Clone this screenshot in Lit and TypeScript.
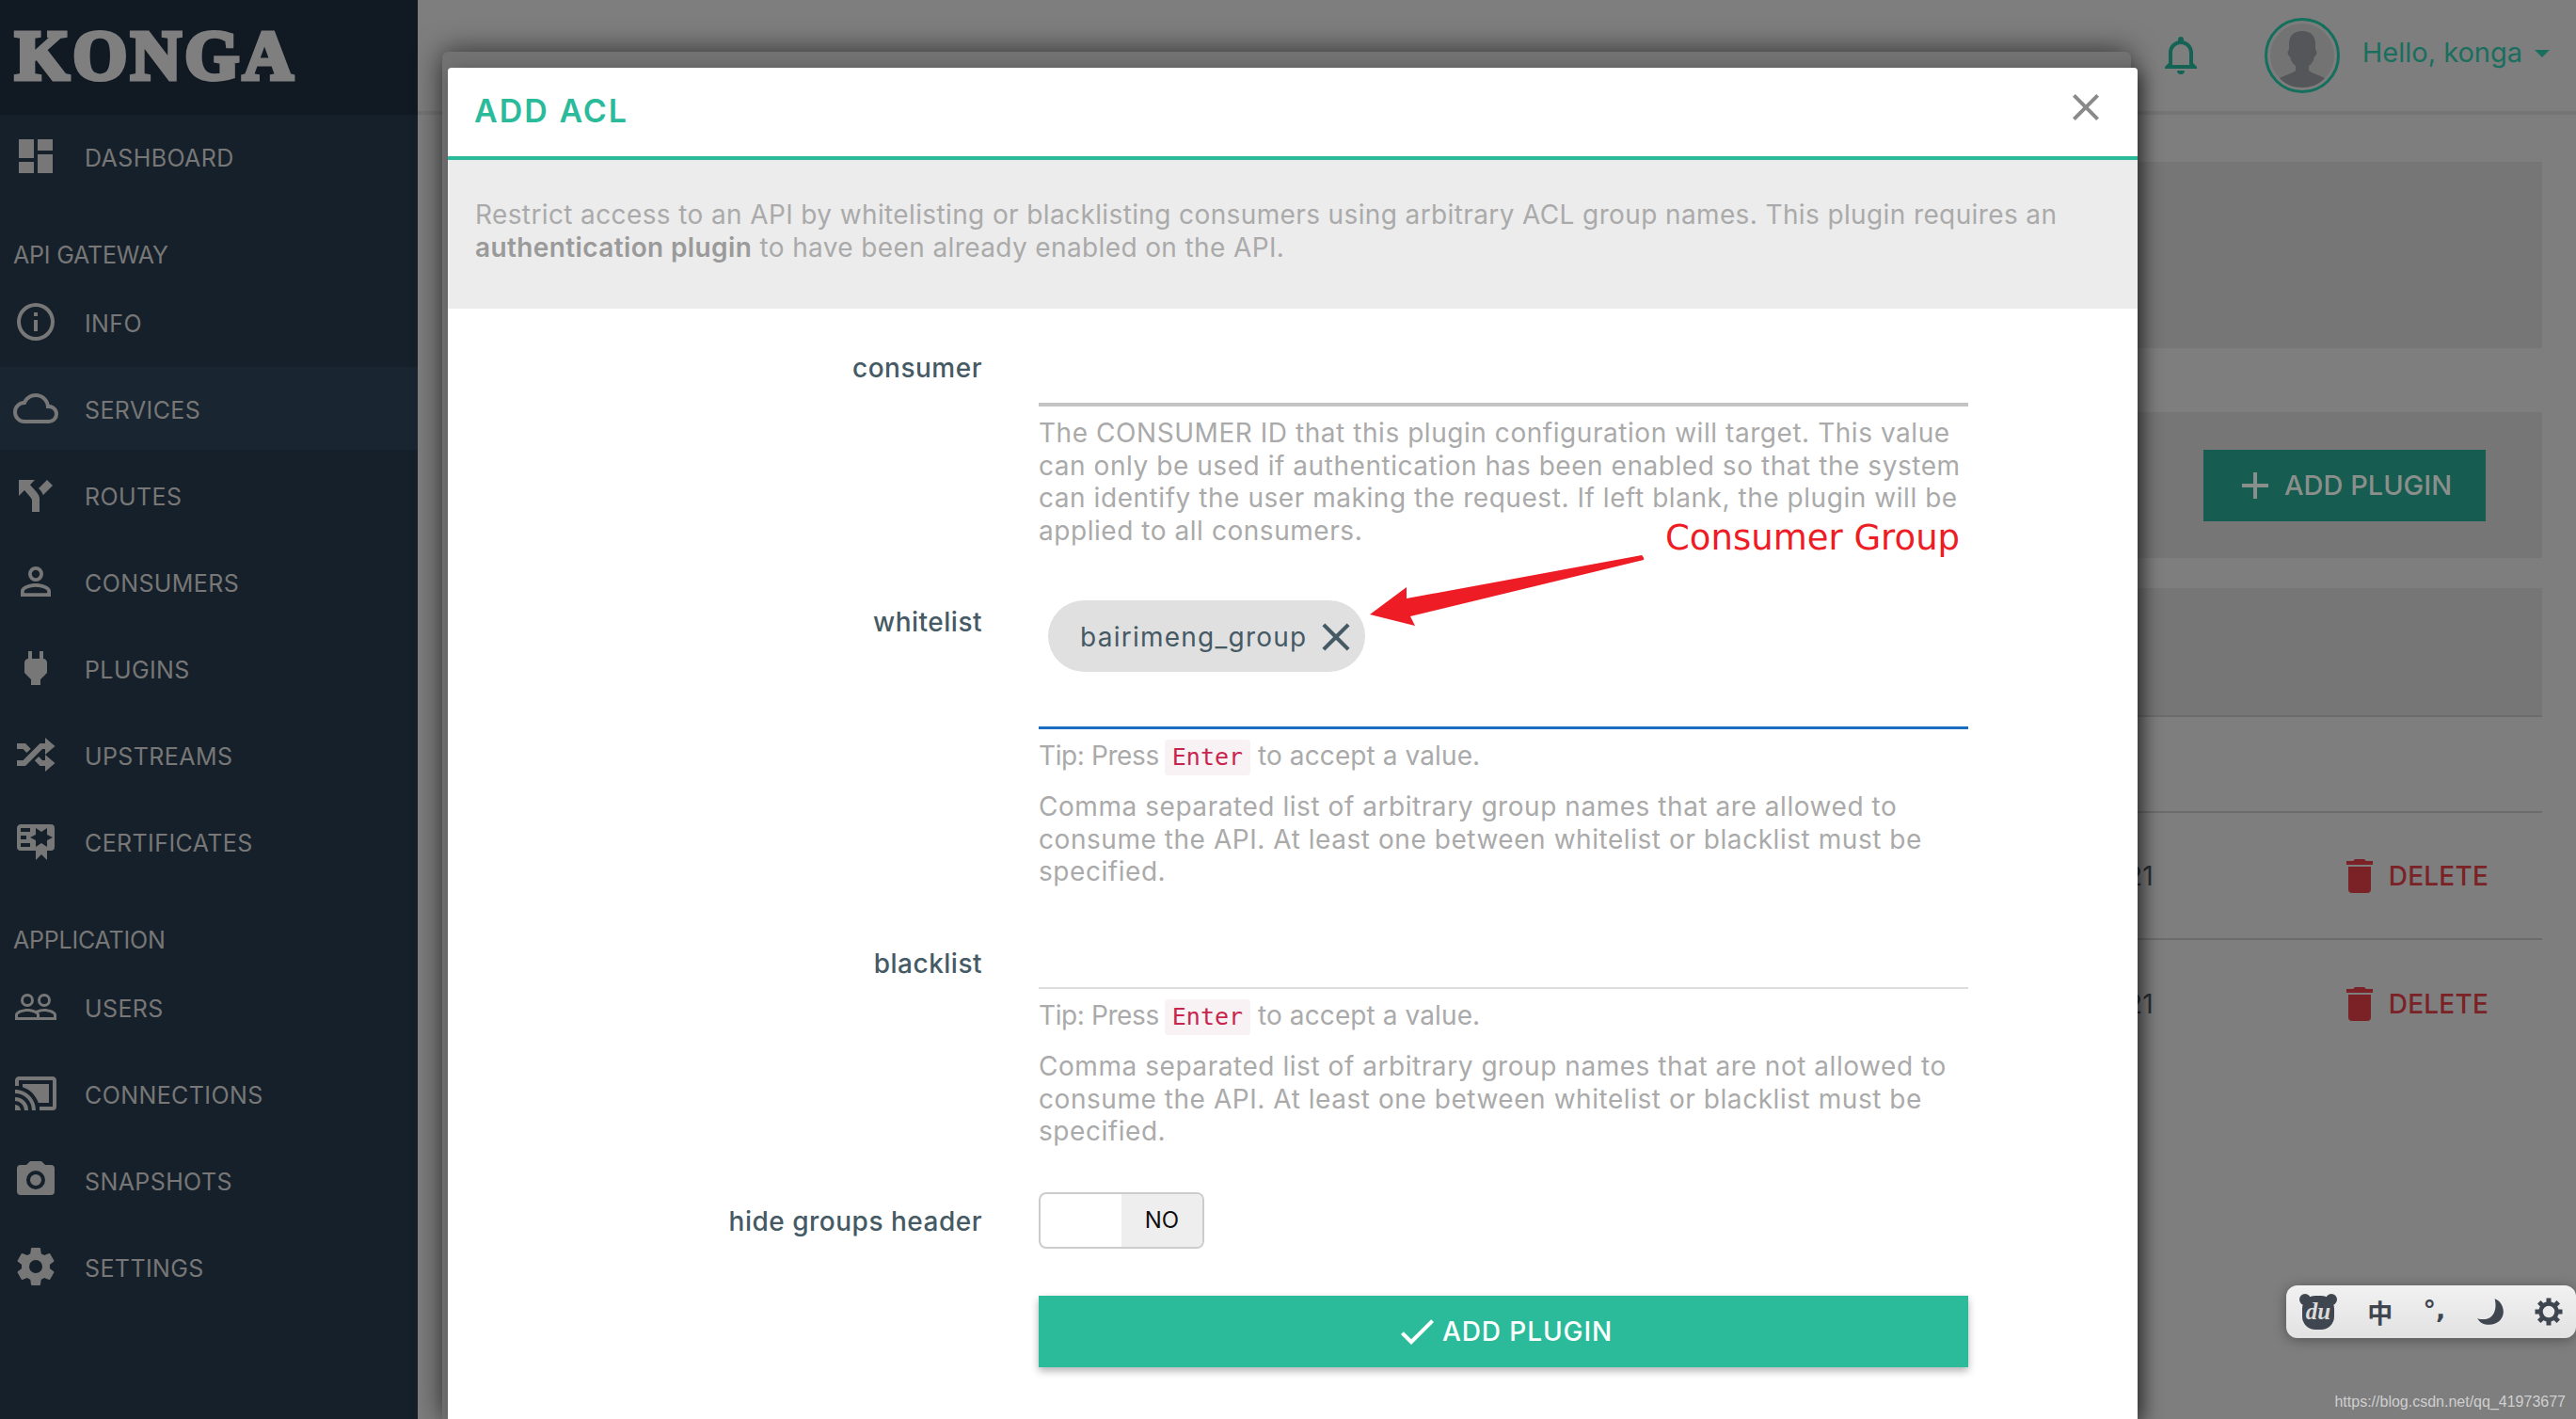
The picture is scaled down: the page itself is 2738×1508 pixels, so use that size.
import { LitElement, html, svg, css } from 'lit';
import { customElement } from 'lit/decorators.js';

// Material design icon paths
const ICONS: Record<string, string> = {
	dashboard: 'M13,3V9H21V3M13,21H21V11H13M3,21H11V15H3M3,13H11V3H3V13Z',
	info: 'M11,9H13V7H11M12,20C7.59,20 4,16.41 4,12C4,7.59 7.59,4 12,4C16.41,4 20,7.59 20,12C20,16.41 16.41,20 12,20M12,2A10,10 0 0,0 2,12A10,10 0 0,0 12,22A10,10 0 0,0 22,12A10,10 0 0,0 12,2M11,17H13V11H11V17Z',
	cloud: 'M19,18H6A4,4 0 0,1 2,14A4,4 0 0,1 6,10H6.71C7.37,7.69 9.5,6 12,6A5.5,5.5 0 0,1 17.5,11.5V12H19A3,3 0 0,1 22,15A3,3 0 0,1 19,18M19.35,10.03C18.67,6.59 15.64,4 12,4C9.11,4 6.6,5.64 5.35,8.03C2.34,8.36 0,10.9 0,14A6,6 0 0,0 6,20H19A5,5 0 0,0 24,15C24,12.36 21.95,10.22 19.35,10.03Z',
	fork: 'M3,4V12.5L6,9.5L9,13C10,14 10,15 10,15V21H14V14C14,14 14,13 13.47,12C12.94,11 12,10 12,10L9,6.58L11.5,4M18,4L13.54,8.47L14,9C14,9 14.93,10 15.47,11C15.68,11.4 15.8,11.79 15.87,12.13L21,7',
	account: 'M12,13C9.33,13 4,14.33 4,17V20H20V17C20,14.33 14.67,13 12,13M12,4A4,4 0 0,0 8,8A4,4 0 0,0 12,12A4,4 0 0,0 16,8A4,4 0 0,0 12,4M12,14.9C14.97,14.9 18.1,16.36 18.1,17V18.1H5.9V17C5.9,16.36 9,14.9 12,14.9M12,5.9A2.1,2.1 0 0,1 14.1,8A2.1,2.1 0 0,1 12,10.1A2.1,2.1 0 0,1 9.9,8A2.1,2.1 0 0,1 12,5.9Z',
	plug: 'M16,7V3H14V7H10V3H8V7H8C7,7 6,8 6,9V14.5L9.5,18V21H14.5V18L18,14.5V9C18,8 17,7 16,7Z',
	shuffle: 'M17,3L22.25,7.5L17,12L22.25,16.5L17,21V18H14.26L11.44,15.18L13.56,13.06L15.5,15H17V12L17,9H15.5L6.5,18H2V15H5.26L14.26,6H17V3M2,6H6.5L9.32,8.82L7.2,10.94L5.26,9H2V6Z',
	certificate: 'M4,3C2.89,3 2,3.89 2,5V15A2,2 0 0,0 4,17H12V22L15,19L18,22V17H20A2,2 0 0,0 22,15V8L22,6V5A2,2 0 0,0 20,3H16V3H4M12,5L15,7L18,5V8.5L21,10L18,11.5V15L15,13L12,15V11.5L9,10L12,8.5V5M4,5H9V7H4V5M4,9H7V11H4V9M4,13H9V15H4V13Z',
	users: 'M16.5,6.5A2,2 0 0,1 18.5,8.5A2,2 0 0,1 16.5,10.5A2,2 0 0,1 14.5,8.5A2,2 0 0,1 16.5,6.5M16.5,12A3.5,3.5 0 0,0 20,8.5A3.5,3.5 0 0,0 16.5,5A3.5,3.5 0 0,0 13,8.5A3.5,3.5 0 0,0 16.5,12M7.5,6.5A2,2 0 0,1 9.5,8.5A2,2 0 0,1 7.5,10.5A2,2 0 0,1 5.5,8.5A2,2 0 0,1 7.5,6.5M7.5,12A3.5,3.5 0 0,0 11,8.5A3.5,3.5 0 0,0 7.5,5A3.5,3.5 0 0,0 4,8.5A3.5,3.5 0 0,0 7.5,12M21.5,17.5H14V16.25C14,15.79 13.8,15.39 13.5,15.03C14.36,14.73 15.44,14.5 16.5,14.5C18.94,14.5 21.5,15.71 21.5,16.25M12.5,17.5H2.5V16.25C2.5,15.71 5.06,14.5 7.5,14.5C9.94,14.5 12.5,15.71 12.5,16.25M16.5,13C15.3,13 13.43,13.34 12,14C10.57,13.33 8.7,13 7.5,13C5.33,13 1,14.08 1,16.25V19H23V16.25C23,14.08 18.67,13 16.5,13Z',
	cast: 'M21,3H3C1.89,3 1,3.89 1,5V8H3V5H21V19H14V21H21A2,2 0 0,0 23,19V5C23,3.89 22.1,3 21,3M1,10V12A9,9 0 0,1 10,21H12C12,14.92 7.07,10 1,10M19,7H5V8.63C8.96,9.91 12.09,13.04 13.37,17H19M1,14V16A5,5 0 0,1 6,21H8A7,7 0 0,0 1,14M1,18V21H4A3,3 0 0,0 1,18Z',
	camera: 'M4,4H7L9,2H15L17,4H20A2,2 0 0,1 22,6V18A2,2 0 0,1 20,20H4A2,2 0 0,1 2,18V6A2,2 0 0,1 4,4M12,7A5,5 0 0,0 7,12A5,5 0 0,0 12,17A5,5 0 0,0 17,12A5,5 0 0,0 12,7M12,9A3,3 0 0,1 15,12A3,3 0 0,1 12,15A3,3 0 0,1 9,12A3,3 0 0,1 12,9Z',
	settings: 'M12,15.5A3.5,3.5 0 0,1 8.5,12A3.5,3.5 0 0,1 12,8.5A3.5,3.5 0 0,1 15.5,12A3.5,3.5 0 0,1 12,15.5M19.43,12.97C19.47,12.65 19.5,12.33 19.5,12C19.5,11.67 19.47,11.34 19.43,11L21.54,9.37C21.73,9.22 21.78,8.95 21.66,8.73L19.66,5.27C19.54,5.05 19.27,4.96 19.05,5.05L16.56,6.05C16.04,5.66 15.5,5.32 14.87,5.07L14.5,2.42C14.46,2.18 14.25,2 14,2H10C9.75,2 9.54,2.18 9.5,2.42L9.13,5.07C8.5,5.32 7.96,5.66 7.44,6.05L4.95,5.05C4.73,4.96 4.46,5.05 4.34,5.27L2.34,8.73C2.21,8.95 2.27,9.22 2.46,9.37L4.57,11C4.53,11.34 4.5,11.67 4.5,12C4.5,12.33 4.53,12.65 4.57,12.97L2.46,14.63C2.27,14.78 2.21,15.05 2.34,15.27L4.34,18.73C4.46,18.95 4.73,19.03 4.95,18.95L7.44,17.94C7.96,18.34 8.5,18.68 9.13,18.93L9.5,21.58C9.54,21.82 9.75,22 10,22H14C14.25,22 14.46,21.82 14.5,21.58L14.87,18.93C15.5,18.67 16.04,18.34 16.56,17.94L19.05,18.95C19.27,19.03 19.54,18.95 19.66,18.73L21.66,15.27C21.78,15.05 21.73,14.78 21.54,14.63L19.43,12.97Z',
	bell: 'M16,17H7V10.5C7,8 9,6 11.5,6C14,6 16,8 16,10.5M18,16V10.5C18,7.43 15.86,4.86 13,4.18V3.5A1.5,1.5 0 0,0 11.5,2A1.5,1.5 0 0,0 10,3.5V4.18C7.13,4.86 5,7.43 5,10.5V16L3,18V19H20V18M11.5,22A2,2 0 0,0 13.5,20H9.5A2,2 0 0,0 11.5,22Z',
	trash: 'M19,4H15.5L14.5,3H9.5L8.5,4H5V6H19M6,19A2,2 0 0,0 8,21H16A2,2 0 0,0 18,19V7H6V19Z',
	close: 'M19,6.41L17.59,5L12,10.59L6.41,5L5,6.41L10.59,12L5,17.59L6.41,19L12,13.41L17.59,19L19,17.59L13.41,12L19,6.41Z',
	check: 'M21,7L9,19L3.5,13.5L4.91,12.09L9,16.17L19.59,5.59L21,7Z',
	plus: 'M19,13H13V19H11V13H5V11H11V5H13V11H19V13Z',
};

const icon = (name: string, cls = '') =>
	html`<svg class="icon ${cls}" viewBox="0 0 24 24"><path d=${ICONS[name]}></path></svg>`;

type NavEntry = { label: string; icon?: string; active?: boolean };

const NAV: NavEntry[] = [
	{ label: 'DASHBOARD', icon: 'dashboard' },
	{ label: 'API GATEWAY' },
	{ label: 'INFO', icon: 'info' },
	{ label: 'SERVICES', icon: 'cloud', active: true },
	{ label: 'ROUTES', icon: 'fork' },
	{ label: 'CONSUMERS', icon: 'account' },
	{ label: 'PLUGINS', icon: 'plug' },
	{ label: 'UPSTREAMS', icon: 'shuffle' },
	{ label: 'CERTIFICATES', icon: 'certificate' },
	{ label: 'APPLICATION' },
	{ label: 'USERS', icon: 'users' },
	{ label: 'CONNECTIONS', icon: 'cast' },
	{ label: 'SNAPSHOTS', icon: 'camera' },
	{ label: 'SETTINGS', icon: 'settings' },
];

// Teeth of the input-method widget's gear
const GEAR_TEETH = [0, 45, 90, 135, 180, 225, 270, 315];

@customElement('app-root')
export class AppRoot extends LitElement {
	static styles = css`
		:host {
			display: block;
			position: relative;
			width: 2738px;
			height: 1508px;
			overflow: hidden;
			background: #7e7e7e;
			font-family: Inter, 'Liberation Sans', sans-serif;
		}
		* {
			box-sizing: border-box;
		}
		.icon {
			display: block;
			width: 48px;
			height: 48px;
			fill: currentColor;
			flex: none;
		}
		.page {
			display: flex;
			height: 100%;
		}

		/* Sidebar */
		.sidebar {
			width: 444px;
			flex: none;
			background: #16202a;
			color: #777;
			font-size: 25px;
		}
		.logo {
			height: 122px;
			background: #111923;
			padding: 14px 0 0 16px;
			font: bold 74px/90px 'Liberation Serif', serif;
			letter-spacing: 4px;
			color: #7f7f7f;
			-webkit-text-stroke: 5px #7f7f7f;
		}
		.item {
			display: flex;
			align-items: center;
			height: 88px;
			margin-bottom: 4px;
			padding-left: 14px;
			letter-spacing: 0.4px;
		}
		.item span {
			margin-top: 3px;
		}
		.item.active {
			background: #192530;
		}
		.item .icon {
			margin-right: 28px;
		}
		.section {
			height: 84px;
			padding: 32px 0 0 14px;
			line-height: 50px;
			letter-spacing: -0.2px;
		}

		/* Page behind the dialog */
		.main {
			flex: 1;
			min-width: 0;
			position: relative;
		}
		.topbar {
			display: flex;
			align-items: center;
			justify-content: flex-end;
			height: 122px;
			border-bottom: 4px solid #757575;
			padding-right: 28px;
			color: #1a6e5e;
			font-size: 29px;
		}
		.bell {
			color: #146355;
			margin-right: 64px;
		}
		.avatar {
			width: 80px;
			height: 80px;
			margin-right: 24px;
		}
		.hello {
			margin-top: -8px;
		}
		.caret {
			width: 0;
			height: 0;
			margin: -4px 0 0 13px;
			border: 8px solid transparent;
			border-top-color: #1a6e5e;
			border-bottom: 0;
		}
		.content {
			padding: 50px 36px 0 40px;
		}
		.tab-mark {
			position: absolute;
			left: 26px;
			top: 150px;
			width: 60px;
			height: 4px;
			background: #15564a;
		}
		.panel {
			background: #767676;
		}
		.panel.one {
			height: 198px;
			margin-bottom: 68px;
		}
		.panel.two {
			display: flex;
			align-items: center;
			justify-content: flex-end;
			height: 155px;
			margin-bottom: 32px;
			padding-right: 60px;
		}
		.panel.three {
			height: 137px;
			border-bottom: 2px solid #6c6c6c;
		}
		.add-btn {
			display: flex;
			align-items: center;
			width: 300px;
			height: 76px;
			padding-left: 31px;
			background: #165c50;
			color: #8a8f8c;
			font-size: 29px;
			font-weight: 500;
		}
		.add-btn .icon {
			margin-right: 7px;
		}
		.row {
			display: flex;
			align-items: center;
			justify-content: flex-end;
			height: 135px;
			border-bottom: 2px solid #6c6c6c;
			padding-right: 57px;
			color: #7a2226;
			font-size: 28px;
			font-weight: 500;
			letter-spacing: 0.2px;
		}
		.row.first {
			height: 102px;
		}
		.row.plain {
			border-bottom: 0;
		}
		.row .when {
			margin-right: 195px;
			color: #2a3035;
			font-weight: 400;
			font-size: 28px;
		}
		.row .icon {
			margin-right: 7px;
		}

		/* Dialog */
		.dialog-back {
			position: absolute;
			left: 470px;
			top: 55px;
			width: 1795px;
			height: 1453px;
			background: #727272;
			border-radius: 6px 6px 0 0;
			box-shadow: 0 0 30px rgba(0, 0, 0, 0.65);
		}
		.dialog {
			position: absolute;
			left: 476px;
			top: 72px;
			width: 1796px;
			height: 1436px;
			background: #fff;
			border-radius: 4px 4px 0 0;
			box-shadow: 6px 6px 18px rgba(0, 0, 0, 0.45);
		}
		.dialog-head {
			display: flex;
			align-items: center;
			justify-content: space-between;
			height: 98px;
			padding: 0 31px 4px 28px;
			border-bottom: 4px solid #2bbb9b;
			color: #2bbb9b;
			font-size: 34px;
			font-weight: 600;
			letter-spacing: 2px;
		}
		.dialog-head .icon {
			color: #8a8a8a;
			margin-top: -6px;
		}
		.intro {
			height: 158px;
			padding: 41px 30px 0 29px;
			background: #ececec;
			color: #aaa;
			font-size: 28px;
			line-height: 34.5px;
			letter-spacing: 0.38px;
		}
		.intro strong {
			font-weight: 600;
			color: #9a9a9a;
		}
		.form {
			padding-top: 40px;
		}
		.field {
			display: grid;
			grid-template-columns: 568px 988px;
			column-gap: 60px;
			margin-bottom: 39px;
		}
		.field > label {
			text-align: right;
			padding-top: 24px;
			color: #455a64;
			font-size: 28px;
			font-weight: 500;
			line-height: 34px;
			letter-spacing: 0.5px;
		}
		.field.consumer > label {
			padding-top: 6px;
		}
		.line {
			height: 68px;
			border-bottom: 2px solid #ddd;
		}
		.field.consumer .line {
			height: 64px;
			border-bottom: 4px solid #c4c4c4;
		}
		.line.focus {
			height: 155px;
			padding: 18px 0 0 10px;
			border-bottom: 3px solid #1c6cc0;
		}
		.chip {
			display: inline-flex;
			align-items: center;
			width: 337px;
			height: 76px;
			padding: 2px 0 0 34px;
			border-radius: 38px;
			background: #e0e0e0;
			color: #455a64;
			font-size: 28px;
			letter-spacing: 1.25px;
		}
		.chip .icon {
			width: 50px;
			height: 50px;
			margin-left: 5px;
		}
		.help {
			color: #aaa;
			font-size: 28px;
			line-height: 34.5px;
			letter-spacing: 0.55px;
		}
		.help.top {
			margin-top: 11px;
		}
		.help.tip {
			margin: 11px 0 16px;
			letter-spacing: 0.1px;
		}
		.press {
			letter-spacing: -0.4px;
		}
		code {
			display: inline-block;
			padding: 0 8px;
			height: 38px;
			margin-left: -2px;
			border-radius: 4px;
			background: #f9f2f4;
			color: #c7254e;
			font: 25px/38px 'DejaVu Sans Mono', monospace;
			letter-spacing: 0;
			vertical-align: middle;
		}
		.field.toggle {
			margin: 47px 0 50px;
			align-items: center;
		}
		.field.toggle > label {
			padding-top: 0;
			margin-top: 3px;
		}
		.switch {
			display: flex;
			width: 176px;
			height: 60px;
			border: 2px solid #ccc;
			border-radius: 8px;
			overflow: hidden;
		}
		.switch span {
			flex: 1;
			display: flex;
			align-items: center;
			justify-content: center;
			font-size: 24px;
			color: #111;
		}
		.switch span.off {
			background: #eee;
		}
		.submit {
			display: flex;
			align-items: center;
			justify-content: center;
			width: 988px;
			height: 76px;
			margin-left: 628px;
			background: #2bbb9b;
			color: #fff;
			font-size: 28px;
			font-weight: 500;
			letter-spacing: 0.9px;
			box-shadow: 0 4px 8px rgba(0, 0, 0, 0.3);
		}
		.submit .icon {
			margin-right: 3px;
		}

		/* Red annotation pasted on the screenshot */
		.note {
			position: absolute;
			left: 1770px;
			top: 550px;
			color: #ee1c25;
			font: 37px/44px 'DejaVu Sans', sans-serif;
			white-space: nowrap;
		}
		.arrow {
			position: absolute;
			left: 1440px;
			top: 580px;
			width: 320px;
			height: 100px;
			fill: #ee1c25;
		}

		/* Browser input-method widget */
		.ime {
			position: absolute;
			left: 2430px;
			top: 1366px;
			display: flex;
			align-items: center;
			justify-content: space-between;
			width: 308px;
			height: 56px;
			padding: 0 14px 0 14px;
			border-radius: 12px;
			background: linear-gradient(#f1f1f1, #e2e2e2);
			box-shadow: 0 2px 14px rgba(0, 0, 0, 0.35);
			color: #3f4650;
		}
		.ime svg {
			display: block;
			flex: none;
		}
		.ime .zh {
			font: bold 27px/1 'Noto Sans CJK SC', sans-serif;
		}
		.ime .punct {
			font: bold 27px/1 'DejaVu Sans', sans-serif;
			margin-top: -6px;
		}
		.ime .gear {
			width: 30px;
			height: 30px;
			color: #3f4650;
		}
		.watermark {
			position: absolute;
			right: 11px;
			top: 1480px;
			color: #cfcfcf;
			font: 16px/20px 'Liberation Sans', sans-serif;
		}
	`;

	private _renderNav(entry: NavEntry) {
		if (!entry.icon) return html`<div class="section">${entry.label}</div>`;
		return html`
			<div class="item ${entry.active ? 'active' : ''}">
				${icon(entry.icon)}<span>${entry.label}</span>
			</div>
		`;
	}

	private _renderTip() {
		return html`
			<div class="help tip"><span class="press">Tip: Press</span> <code>Enter</code> to accept a value.</div>
		`;
	}

	render() {
		return html`
			<div class="page">
				<aside class="sidebar">
					<div class="logo">KONGA</div>
					${NAV.map((entry) => this._renderNav(entry))}
				</aside>
				<div class="main">
					<div class="topbar">
						${icon('bell', 'bell')}
						<svg class="avatar" viewBox="0 0 80 80">
							<circle cx="40" cy="40" r="38.5" fill="#7d7d7d" stroke="#146f5d" stroke-width="3"></circle>
							<circle cx="40" cy="40" r="34" fill="#737373"></circle>
							<path fill="#55565a" d="M40 14c-9 0-14 5-14 14v6c-2 0-2 6 1 7 1 5 3 8 6 10v5c-3 3-12 5-17 8 6 7 15 10 24 10s18-3 24-10c-5-3-14-5-17-8v-5c3-2 5-5 6-10 3-1 3-7 1-7v-6c0-9-5-14-14-14z"></path>
						</svg>
						<span class="hello">Hello, konga</span>
						<span class="caret"></span>
					</div>
					<div class="tab-mark"></div>
					<div class="content">
						<div class="panel one"></div>
						<div class="panel two">
							<div class="add-btn">${icon('plus')}ADD PLUGIN</div>
						</div>
						<div class="panel three"></div>
						<div class="row first"></div>
						<div class="row"><span class="when">21</span>${icon('trash')}DELETE</div>
						<div class="row plain"><span class="when">21</span>${icon('trash')}DELETE</div>
					</div>
				</div>
			</div>

			<div class="dialog-back"></div>
			<div class="dialog">
				<div class="dialog-head"><span>ADD ACL</span>${icon('close')}</div>
				<div class="intro">
					Restrict access to an API by whitelisting or blacklisting consumers using arbitrary ACL group names. This plugin requires an<br />
					<strong>authentication plugin</strong> to have been already enabled on the API.
				</div>
				<div class="form">
					<div class="field consumer">
						<label>consumer</label>
						<div>
							<div class="line"></div>
							<div class="help top">
								The CONSUMER ID that this plugin configuration will target. This value<br />
								can only be used if authentication has been enabled so that the system<br />
								can identify the user making the request. If left blank, the plugin will be<br />
								applied to all consumers.
							</div>
						</div>
					</div>
					<div class="field">
						<label>whitelist</label>
						<div>
							<div class="line focus">
								<span class="chip">bairimeng_group${icon('close')}</span>
							</div>
							${this._renderTip()}
							<div class="help">
								Comma separated list of arbitrary group names that are allowed to<br />
								consume the API. At least one between whitelist or blacklist must be<br />
								specified.
							</div>
						</div>
					</div>
					<div class="field">
						<label>blacklist</label>
						<div>
							<div class="line"></div>
							${this._renderTip()}
							<div class="help">
								Comma separated list of arbitrary group names that are not allowed to<br />
								consume the API. At least one between whitelist or blacklist must be<br />
								specified.
							</div>
						</div>
					</div>
					<div class="field toggle">
						<label>hide groups header</label>
						<div class="switch"><span></span><span class="off">NO</span></div>
					</div>
					<div class="submit">${icon('check')}ADD PLUGIN</div>
				</div>
			</div>

			<div class="note">Consumer Group</div>
			<svg class="arrow" viewBox="0 0 320 100">
				<path d="M16 73 L55 44 L55 56 L305 10 Q308 13 307 15 L59 75 L64 85 Z"></path>
			</svg>

			<div class="ime">
				<svg width="40" height="38" viewBox="0 0 40 38">
					<circle cx="6" cy="6" r="6" fill="#3f4650"></circle>
					<circle cx="34" cy="6" r="6" fill="#3f4650"></circle>
					<rect x="3" y="2" width="34" height="36" rx="14" fill="#3f4650"></rect>
					<text x="20" y="27" text-anchor="middle" font-family="Liberation Serif" font-style="italic" font-weight="bold" font-size="25" fill="#dcdcdc">du</text>
				</svg>
				<span class="zh">中</span>
				<span class="punct">°,</span>
				<svg width="30" height="30" viewBox="0 0 26 26">
					<path fill="#3f4650" d="M17 1C21 2 25 7 25 13 25 20 19 25 12 25 7 25 3 23 1 19 3 20 5 20 7 20 14 20 20 13 17 1Z"></path>
				</svg>
				<svg class="gear" viewBox="0 0 30 30">
					<circle cx="15" cy="15" r="8.5" fill="none" stroke="currentColor" stroke-width="4.5"></circle>
					${GEAR_TEETH.map((deg) => svg`
						<rect x="12.5" y="0.5" width="5" height="6" fill="currentColor" transform="rotate(${deg} 15 15)"></rect>
					`)}
				</svg>
			</div>
			<div class="watermark">https://blog.csdn.net/qq_41973677</div>
		`;
	}
}
